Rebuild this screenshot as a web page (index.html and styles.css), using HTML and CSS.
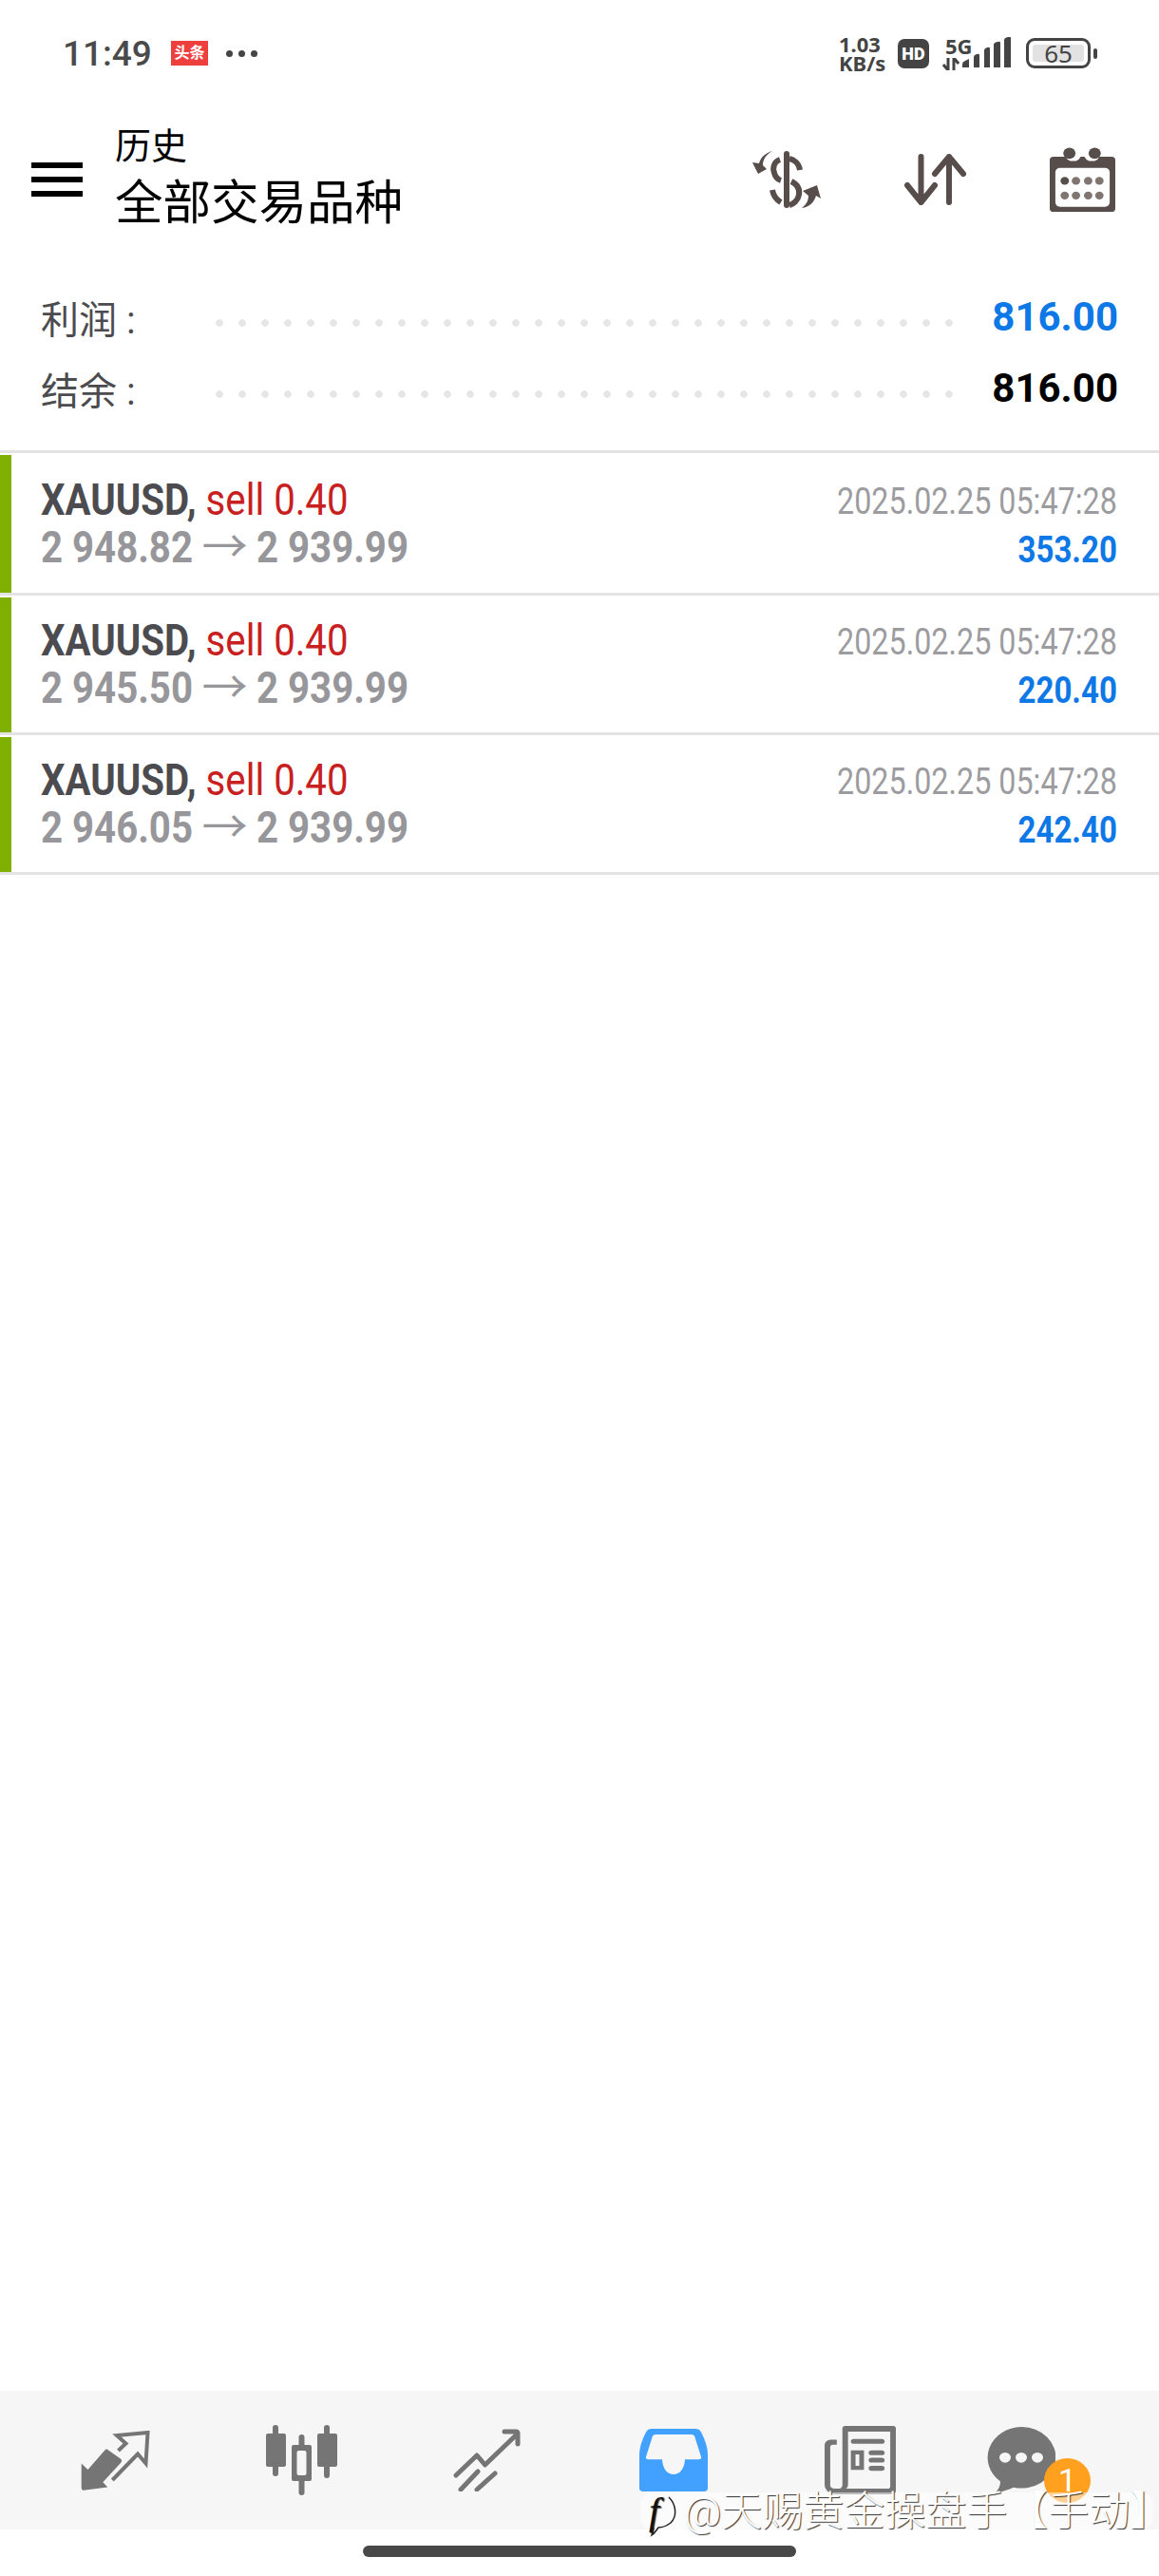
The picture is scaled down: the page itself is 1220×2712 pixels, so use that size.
FILE: index.html
```html
<!DOCTYPE html>
<html lang="zh">

<head>
    <meta charset="UTF-8">
    <meta name="viewport" content="width=device-width, initial-scale=1.0">
    <title>历史</title>
    <link rel="stylesheet" href="styles.css">
</head>

<body>
    <div class="phone">
        <div class="status-bar">
            <div class="status-left">
                <span class="clock">11:49</span>
                <span class="app-badge">头条</span>
                <span class="more-dots"><i></i><i></i><i></i></span>
            </div>
            <div class="status-right">
                <span class="speed">1.03<br>KB/s</span>
                <span class="hd">HD</span>
                <div class="net">
                    <span class="five-g">5G</span>
                    <svg width="18" height="13" viewBox="0 0 18 13">
                        <path d="M6 0v13M1 7l5 6M12 0v13M12 0l5 6" fill="none" stroke="#444" stroke-width="3"/>
                    </svg>
                </div>
                <svg class="bars" width="51" height="32" viewBox="0 0 51 32">
                    <path d="M0 32v-3q0-3 3-4l4-2v9zM12 32V21q0-2 3-3 3-1 3 1v13zM23 32V14q0-2 3-3 3-1 3 1v20zM33 32V8q0-2 4-3 3-1 3 1v26zM44 32V3q0-2 4-3 3-1 3 1v31z" fill="#444"/>
                </svg>
                <span class="battery"><span class="battery-level"></span><span class="battery-num">65</span></span>
                <span class="battery-tip"></span>
            </div>
        </div>

        <div class="toolbar">
            <div class="burger"><i></i><i></i><i></i></div>
            <div class="titles">
                <div class="title-small">历史</div>
                <div class="title-big">全部交易品种</div>
            </div>
            <div class="tool-icons">
                <svg width="72" height="60" viewBox="14 18 72 60">
                    <path d="M50 21v54" fill="none" stroke="#574d4b" stroke-width="6" stroke-linecap="round"/>
                    <g fill="none" stroke="#574d4b" stroke-width="6">
                        <path d="M64 38c-1-7-6-11-11-12M43 27c-6 2-8 8-6 14 1 4 4 7 7 8M55 50c6 3 9 8 8 14-1 6-6 10-10 11M35 59c1 6 4 10 9 13"/>
                    </g>
                    <path d="M35 18C28 22 25 27 25 33L29 37 20 42 14 30 21 31C23 24 28 20 35 18zM66 78C71 74 73 70 73 65L67 60 82 54 86 68 81 65C79 72 74 77 66 78z" fill="#574d4b"/>
                </svg>
                <svg width="65" height="54" viewBox="0 0 65 54">
                    <path d="M17.500 3v48M3 33l14.500 18 14.500-18M47 51V3M32 21L47 3l15 18" fill="none" stroke="#574d4b" stroke-width="6" stroke-linecap="round" stroke-linejoin="round"/>
                </svg>
                <svg width="69" height="69" viewBox="0 0 70 76" preserveAspectRatio="none">
                    <path d="M4 11h13a9 9 0 0 0 5 5h6a9 9 0 0 0 5-5h4a9 9 0 0 0 5 5h6a9 9 0 0 0 5-5h13q4 0 4 4v56q0 4-4 4H4q-4 0-4-4V15q0-4 4-4z" fill="#574d4b"/>
                    <circle cx="21" cy="7" r="6.500" fill="#574d4b"/>
                    <circle cx="48" cy="7" r="6.500" fill="#574d4b"/>
                    <rect x="6" y="24" width="58" height="45" rx="5" fill="#fff"/>
                    <g fill="#7f7571">
                        <circle cx="16" cy="39" r="4.500" fill="#574d4b"/><circle cx="28" cy="39" r="4.500"/><circle cx="41" cy="39" r="4.500"/><circle cx="53" cy="39" r="4.500"/>
                        <circle cx="16" cy="56" r="4.500"/><circle cx="28" cy="56" r="4.500"/><circle cx="41" cy="56" r="4.500"/><circle cx="53" cy="56" r="4.500"/>
                    </g>
                </svg>
            </div>
        </div>

        <div class="summary">
            <div class="summary-row">
                <span class="summary-label">利润 :</span>
                <span class="dots"></span>
                <span class="summary-value blue">816.00</span>
            </div>
            <div class="summary-row">
                <span class="summary-label">结余 :</span>
                <span class="dots"></span>
                <span class="summary-value">816.00</span>
            </div>
        </div>

        <div class="deals">
            <div class="deal first">
                <span class="deal-mark"></span>
                <div class="deal-body">
                    <div class="deal-left">
                        <div class="narrow"><b>XAUUSD,</b> <span class="red">sell 0.40</span></div>
                        <div class="narrow grey-bold">2 948.82 <span class="arrow">→</span> 2 939.99</div>
                    </div>
                    <div class="deal-right">
                        <div class="narrow-r date">2025.02.25 05:47:28</div>
                        <div class="narrow-r profit">353.20</div>
                    </div>
                </div>
            </div>
            <div class="deal">
                <span class="deal-mark"></span>
                <div class="deal-body">
                    <div class="deal-left">
                        <div class="narrow"><b>XAUUSD,</b> <span class="red">sell 0.40</span></div>
                        <div class="narrow grey-bold">2 945.50 <span class="arrow">→</span> 2 939.99</div>
                    </div>
                    <div class="deal-right">
                        <div class="narrow-r date">2025.02.25 05:47:28</div>
                        <div class="narrow-r profit">220.40</div>
                    </div>
                </div>
            </div>
            <div class="deal">
                <span class="deal-mark"></span>
                <div class="deal-body">
                    <div class="deal-left">
                        <div class="narrow"><b>XAUUSD,</b> <span class="red">sell 0.40</span></div>
                        <div class="narrow grey-bold">2 946.05 <span class="arrow">→</span> 2 939.99</div>
                    </div>
                    <div class="deal-right">
                        <div class="narrow-r date">2025.02.25 05:47:28</div>
                        <div class="narrow-r profit">242.40</div>
                    </div>
                </div>
            </div>
        </div>

        <div class="spacer"></div>

        <div class="tabbar">
            <div class="tab">
                <svg width="73" height="63" viewBox="15 9 73 63">
                    <path d="M15.700 43.500L22.500 50 40 30Q42 27.500 44 29.500L57.500 39Q59 41 57 43L38.300 63.300 43.300 68.500 18 71.700Q15.700 72 15.700 69z" fill="#757575"/>
                    <path d="M48.300 61L75 33.500 83.500 43.500 85.500 11 53 14 62.500 22.500 54.500 30" fill="none" stroke="#757575" stroke-width="4"/>
                </svg>
            </div>
            <div class="tab">
                <svg width="75" height="74" viewBox="0 0 75 74">
                    <g fill="#757575">
                        <rect x="7" y="0" width="6" height="54" rx="3"/>
                        <rect x="0" y="9" width="21" height="35" rx="2"/>
                        <rect x="34.500" y="10" width="6" height="64" rx="3"/>
                        <rect x="27" y="21" width="21" height="38" rx="2"/>
                        <rect x="61" y="0" width="6" height="56" rx="3"/>
                        <rect x="54" y="9" width="21" height="35" rx="2"/>
                    </g>
                    <rect x="32.500" y="27" width="10" height="26" rx="2" fill="#f6f6f6"/>
                </svg>
            </div>
            <div class="tab">
                <svg width="72" height="66" viewBox="0 0 72 66">
                    <path d="M3 49l22-21 8.500 10L68 5M54 3h12q2 0 2 2v11M8 64l18-19M25 64l19-17" fill="none" stroke="#757575" stroke-width="5" stroke-linecap="round" stroke-linejoin="round"/>
                </svg>
            </div>
            <div class="tab">
                <svg width="72" height="66" viewBox="0 0 72 78" preserveAspectRatio="none">
                    <path d="M13 0h46q4 0 6 4 7 16 7 28v42q0 4-4 4H4q-4 0-4-4V32Q0 20 7 4q2-4 6-4z" fill="#42a0ff"/>
                    <path d="M17 7h38q2 0 3 2l7 26q1 3-3 3H48c-1 25-23 25-24 0H10q-4 0-3-3l7-26q1-2 3-2z" fill="#f6f6f6"/>
                </svg>
            </div>
            <div class="tab">
                <svg width="75" height="72" viewBox="0 0 76 84" preserveAspectRatio="none">
                    <g fill="#757575">
                        <path d="M19 3q0-3 3-3h51q3 0 3 3v76q0 5-5 5H16q-8 0-12-3-4-4-4-9V24q0-6 6-7h7v6H9q-3 0-3 3v47q0 3 4 4h6q3-1 3-5zM25 7v66q0 2-2 4h44q3 0 3-3V7z"/>
                        <rect x="28" y="16" width="36" height="6" rx="3"/>
                        <path d="M28 30h14v24H28zM33 35v14h4V35z"/>
                        <rect x="47" y="30" width="17" height="6" rx="3"/>
                        <rect x="47" y="39" width="17" height="6" rx="3"/>
                        <rect x="47" y="49" width="17" height="6" rx="3"/>
                    </g>
                </svg>
            </div>
            <div class="tab tab-chat">
                <div class="chat">
                    <svg width="72" height="70" viewBox="0 0 72 78" preserveAspectRatio="none">
                        <path d="M36 0a36 36 0 1 1-8 71q-8 4-20 7 6-6 6-14A36 36 0 0 1 36 0z" fill="#757575"/>
                        <circle cx="19" cy="36" r="6" fill="#f6f6f6"/><circle cx="36" cy="36" r="6" fill="#f6f6f6"/><circle cx="53" cy="36" r="6" fill="#f6f6f6"/>
                    </svg>
                    <span class="chat-badge">1</span>
                </div>
            </div>
        </div>

        <div class="home-strip"><span class="home-bar"></span></div>

        <div class="watermark">
            <svg class="wm-logo" width="40" height="46" viewBox="0 0 40 46">
                <text x="7" y="31" class="wm-f">f</text>
                <path d="M28 3c8 8 9 20 2 27-4 3-10 5-13 5-2 3-4 6-7 8 1-3 2-5 2-8" fill="none" stroke="#222" stroke-width="1.500"/>
            </svg>
            <span>@天赐黄金操盘手【手动<span class="wm-end">】</span></span>
        </div>
    </div>
</body>

</html>
```

FILE: styles.css
```css
* {
    margin: 0;
    padding: 0;
    box-sizing: border-box;
}

body {
    background: #ffffff;
    font-family: Roboto, "Noto Sans CJK SC", sans-serif;
    color: #000;
}

.phone {
    position: relative;
    width: 1220px;
    height: 2712px;
    display: flex;
    flex-direction: column;
    overflow: hidden;
}

.status-bar {
    height: 110px;
    padding: 34px 65px 0 66px;
    display: flex;
    justify-content: space-between;
    align-items: flex-start;
}

.status-left {
    display: flex;
    align-items: center;
    height: 44px;
}

.clock {
    font-size: 37px;
    font-weight: 500;
    color: #4a4a4a;
    width: 114px;
}

.app-badge {
    width: 39px;
    height: 26px;
    background: #ee3f3f;
    color: #fff;
    font-size: 16px;
    font-weight: 700;
    line-height: 26px;
    text-align: center;
}

.more-dots {
    display: flex;
    gap: 6px;
    margin-left: 19px;
}

.more-dots i {
    width: 7px;
    height: 7px;
    border-radius: 50%;
    background: #444;
}

.status-right {
    display: flex;
    align-items: center;
    height: 44px;
    color: #444;
}

.speed {
    font-family: "Noto Sans", sans-serif;
    font-size: 22px;
    font-weight: 700;
    line-height: 20px;
    width: 62px;
}

.hd {
    width: 33px;
    height: 31px;
    background: #444;
    color: #fff;
    border-radius: 7px;
    font-size: 18px;
    font-weight: 900;
    line-height: 31px;
    text-align: center;
}

.net {
    width: 32px;
    margin-left: 14px;
    display: flex;
    flex-direction: column;
    gap: 3px;
}

.five-g {
    font: 700 22px/19px "Noto Sans", sans-serif;
    padding-left: 3px;
}

.bars {
    margin-left: -11px;
    margin-top: -2px;
}

.battery {
    position: relative;
    width: 68px;
    height: 32px;
    margin-left: 16px;
    border: 3px solid #444;
    border-radius: 9px;
    display: block;
}

.battery-level {
    position: absolute;
    left: 4px;
    top: 4px;
    bottom: 4px;
    width: 54px;
    background: #e2e2e2;
    border-radius: 3px;
}

.battery-num {
    position: absolute;
    left: 0;
    right: 0;
    top: 0;
    text-align: center;
    font: 400 26px/26px "Noto Sans", sans-serif;
}

.battery-tip {
    width: 4px;
    height: 11px;
    margin-left: 3px;
    background: #444;
    border-radius: 2px;
}

.toolbar {
    height: 158px;
    display: flex;
    align-items: center;
    padding: 0 46px 0 33px;
}

.burger {
    width: 54px;
    display: flex;
    flex-direction: column;
    gap: 9px;
}

.burger i {
    height: 6px;
    background: #000;
}

.titles {
    margin-left: 34px;
    flex: 1;
}

.title-small {
    font-size: 38px;
    line-height: 50px;
}

.title-big {
    font-size: 50.500px;
    line-height: 70px;
}

.tool-icons {
    display: flex;
    align-items: center;
    gap: 88px;
}

.summary {
    padding: 28px 43px 0;
    height: 206px;
}

.summary-row {
    display: flex;
    align-items: center;
    height: 75px;
}

.summary-label {
    width: 184px;
    font-size: 40px;
    color: #4c4c50;
    white-space: nowrap;
}

.dots {
    flex: 0 0 776px;
    height: 8px;
    margin-top: 12px;
    background: radial-gradient(circle at 4px 4px, #e6e6e6 3.500px, transparent 4px) 0 0 / 24px 8px repeat-x;
}

.summary-value {
    flex: 1;
    text-align: right;
    font-size: 42px;
    font-weight: 700;
}

.blue {
    color: #0d78e6;
}

.deals {
    border-top: 3px solid #e3e3e3;
}

.deal {
    height: 147px;
    border-bottom: 3px solid #e3e3e3;
    display: flex;
}

.deal.first {
    height: 150px;
}

.deal-mark {
    width: 12px;
    margin-top: 2px;
    background: #7fb000;
}

.deal-body {
    flex: 1;
    padding: 0 44px 0 31px;
    display: flex;
    justify-content: space-between;
    align-items: center;
}

.deal-right {
    padding-top: 6px;
}

.narrow,
.narrow-r {
    white-space: nowrap;
    font-size: 47px;
    line-height: 50px;
}

.narrow {
    transform: scaleX(0.855);
    transform-origin: left center;
    color: #4c4c50;
}

.narrow-r {
    transform-origin: right center;
    text-align: right;
}

.red {
    color: #c7201f;
    font-weight: 400;
}

.grey-bold {
    color: #97979b;
    font-weight: 700;
}

.arrow {
    display: inline-block;
    margin: 0 4px;
    font-weight: 400;
    transform: scaleX(1.2);
}

.date {
    color: #9c9ca0;
    font-size: 38px;
    line-height: 51px;
    transform: scaleX(0.85);
}

.profit {
    color: #0d78e6;
    font-weight: 700;
    font-size: 38px;
    line-height: 51px;
    transform: scaleX(0.87);
}

.spacer {
    flex: 1;
}

.tabbar {
    height: 146px;
    background: #f6f6f6;
    padding-left: 23px;
    display: flex;
    align-items: center;
}

.tab {
    width: 196px;
    display: flex;
    justify-content: center;
}

.tab-chat {
    width: 144px;
}

.chat {
    position: relative;
    height: 70px;
}

.chat-badge {
    position: absolute;
    left: 60px;
    top: 33px;
    width: 49px;
    height: 47px;
    border-radius: 50%;
    background: #ffa01e;
    color: #fff;
    font-size: 34px;
    line-height: 47px;
    text-align: center;
}

.home-strip {
    height: 49px;
    display: flex;
    justify-content: center;
    padding-top: 17px;
}

.home-bar {
    width: 456px;
    height: 12px;
    border-radius: 6px;
    background: #484848;
}

.watermark {
    position: absolute;
    left: 674px;
    top: 2624px;
    width: 540px;
    height: 40px;
    padding-left: 2px;
    display: flex;
    align-items: center;
    gap: 4px;
    border-radius: 14px;
    background: rgba(255, 255, 255, 0.5);
    font-size: 43px;
    font-weight: 300;
    line-height: 46px;
    color: #fff;
    text-shadow: 1px 1px 1px rgba(0, 0, 0, 0.8);
    white-space: nowrap;
}

.wm-logo {
    overflow: visible;
    flex: none;
    margin-top: 10px;
}

.wm-f {
    font: italic 400 40px "Liberation Serif", serif;
    fill: #111;
}

.wm-end {
    font-feature-settings: "halt";
}
```
